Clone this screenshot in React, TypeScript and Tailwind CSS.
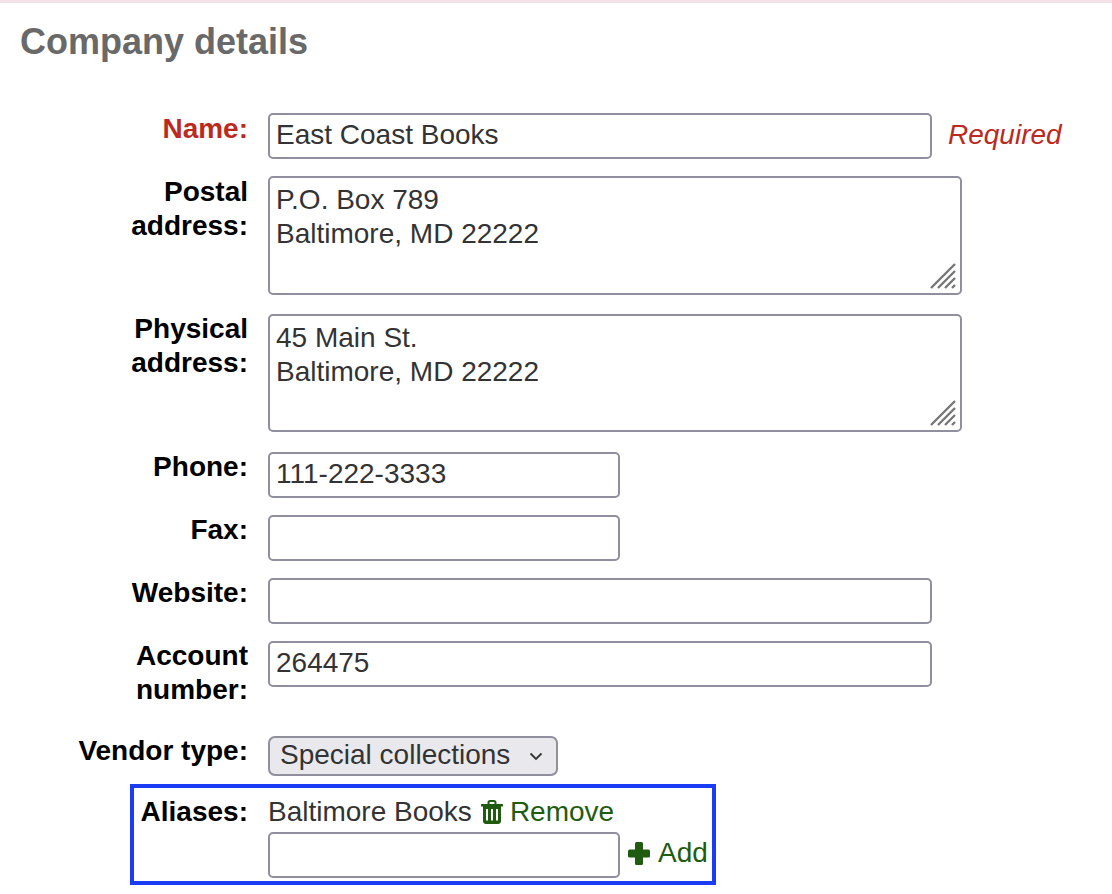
import React from 'react';

const inputCls =
  'block h-[46px] border-2 border-[#8f8f9d] rounded-[5px] px-[6px] pb-[2px] text-[28px] text-[#333333] bg-white outline-none';

const Grip = () => (
  <svg className="absolute right-[6px] bottom-[6px] w-[26px] h-[26px]" viewBox="0 0 26 26" fill="none" stroke="#777777" strokeWidth="2.4">
    <path d="M1 25L25 1M8 25L25 8M15 25L25 15M22 25L25 22" />
  </svg>
);

const TrashIcon = () => (
  <svg className="w-[22px] h-[24px] mr-[7px]" viewBox="0 0 22 24" fill="#1f5c10">
    <path
      fillRule="evenodd"
      d="M6.5 4V2.5C6.5 1.2 7.5 0 9 0H13C14.5 0 15.5 1.2 15.5 2.5V4H21.5C21.8 4 22 4.2 22 4.5V6.5H20V21C20 22.7 18.7 24 17 24H5C3.3 24 2 22.7 2 21V6.5H0V4.5C0 4.2 .2 4 .5 4ZM8.5 4H13.5V2.5C13.5 2.2 13.3 2 13 2H9C8.7 2 8.5 2.2 8.5 2.5ZM5 9H7V20.5H5ZM10 9H12V20.5H10ZM15 9H17V20.5H15Z"
    />
  </svg>
);

const PlusIcon = () => (
  <svg className="w-[22px] h-[23px] mr-[8px]" viewBox="0 0 22 23" fill="#1f5c10">
    <rect x="7" y="0" width="8" height="23" rx="1.5" />
    <rect x="0" y="7.5" width="22" height="8" rx="1.5" />
  </svg>
);

const Row = ({ label, red, tight, mt, children }: { label: React.ReactNode; red?: boolean; tight?: boolean; mt: string; children: React.ReactNode }) => (
  <div className={`flex ${mt}`}>
    <div className={`w-[248px] shrink-0 text-right font-bold leading-[34px] ${tight ? '-mt-[2px]' : '-mt-[1px]'} ${red ? 'text-[#bb2a1e]' : 'text-black'}`}>{label}</div>
    <div className="ml-5 flex items-start">{children}</div>
  </div>
);

const App: React.FC = () => {
  return (
    <div className="w-[1112px] h-[894px] overflow-hidden bg-white font-['Liberation_Sans',Arial,sans-serif] text-[28px]">
      <div className="h-[3px] bg-[#f3e3e8]" />
      <h1 className="ml-[20px] mt-[19px] text-[36px] leading-[40px] font-bold text-[#696969]">Company details</h1>

      <form>
        <Row label="Name:" red mt="mt-[51px]">
          <input className={`${inputCls} w-[664px]`} defaultValue="East Coast Books" />
          <em className="ml-4 leading-[44px] text-[#bb2a1e]">Required</em>
        </Row>
        <Row label={<>Postal<br />address:</>} mt="mt-[17px]">
          <div className="relative">
            <textarea className={`${inputCls} h-[119px] w-[694px] resize-none leading-[34px] pt-[5px]`} defaultValue={'P.O. Box 789\nBaltimore, MD 22222'} />
            <Grip />
          </div>
        </Row>
        <Row label={<>Physical<br />address:</>} tight mt="mt-[19px]">
          <div className="relative">
            <textarea className={`${inputCls} h-[118px] w-[694px] resize-none leading-[34px] pt-[5px]`} defaultValue={'45 Main St.\nBaltimore, MD 22222'} />
            <Grip />
          </div>
        </Row>
        <Row label="Phone:" tight mt="mt-5">
          <input className={`${inputCls} w-[352px]`} defaultValue="111-222-3333" />
        </Row>
        <Row label="Fax:" tight mt="mt-[17px]">
          <input className={`${inputCls} w-[352px]`} />
        </Row>
        <Row label="Website:" tight mt="mt-[17px]">
          <input className={`${inputCls} w-[664px]`} />
        </Row>
        <Row label={<>Account<br />number:</>} tight mt="mt-[17px]">
          <input className={`${inputCls} w-[664px]`} defaultValue="264475" />
        </Row>
        <Row label="Vendor type:" tight mt="mt-[29px]">
          <div className="flex items-center h-[40px] w-[290px] border-2 border-[#8f8f9d] rounded-[7px] bg-[#e9e9ed] pl-[10px] text-[#333333]">
            <span className="-mt-[2px]">Special collections</span>
            <svg className="ml-[19px] w-[14px] h-[9px]" viewBox="0 0 14 9" fill="none" stroke="#333333" strokeWidth="1.8">
              <path d="M1.5 1.5L7 7L12.5 1.5" />
            </svg>
          </div>
        </Row>

        <div className="ml-[130px] mt-2 w-[586px] h-[101px] border-4 border-[#1a3cf5] flex">
          <div className="w-[114px] shrink-0 text-right font-bold text-black leading-[34px] pt-[7px]">Aliases:</div>
          <div className="ml-5">
            <div className="flex items-center h-[34px] mt-[7px] text-[#333333]">
              Baltimore Books
              <a className="ml-[9px] flex items-center text-[#1f5c10]">
                <TrashIcon />
                Remove
              </a>
            </div>
            <div className="flex items-center mt-[3px]">
              <input className={`${inputCls} w-[352px]`} />
              <a className="ml-2 -mt-[4px] flex items-center text-[#1f5c10]">
                <PlusIcon />
                Add
              </a>
            </div>
          </div>
        </div>
      </form>
    </div>
  );
};

export default App;
